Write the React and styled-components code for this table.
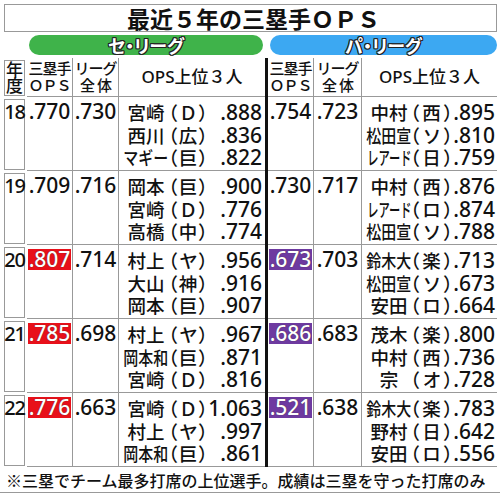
import React from 'react';
import styled, { createGlobalStyle } from 'styled-components';

const GlobalStyle = createGlobalStyle`
  body {
    margin: 0;
    background: #fff;
  }
`;

const COLS = '24px 45px 46px 147px 3px 45px 48px 1fr';
const LINE = '#999';

const Sheet = styled.div`
  width: 500px;
  height: 496px;
  padding-top: 4px;
  box-sizing: border-box;
  background: #fff;
  color: #111;
  font-family: "Noto Sans", "Noto Sans CJK JP", sans-serif;
`;

const Title = styled.h1`
  margin: 0 3px 0 4px;
  height: 28px;
  box-sizing: border-box;
  border: 1px solid ${LINE};
  display: flex;
  align-items: center;
  justify-content: center;
  padding-left: 6px;
  font-family: "Noto Sans CJK JP", sans-serif;
  font-size: 23px;
  font-weight: 700;
  line-height: 1;
`;

const PillRow = styled.div`
  display: flex;
  gap: 7px;
  height: 20px;
  margin: 3px 3px 0 29px;
`;

const LeaguePill = styled.div`
  flex: ${(p) => (p.$width ? `0 0 ${p.$width}px` : '1')};
  border-radius: 10px;
  background: ${(p) => p.$color};
  display: flex;
  align-items: center;
  justify-content: center;
  color: #fff;
  font-family: "Noto Sans CJK JP", sans-serif;
  font-size: 18px;
  font-weight: 700;
  line-height: 1;
  font-feature-settings: "palt";
  text-shadow: 1px 0 0 #222, -1px 0 0 #222, 0 1px 0 #222, 0 -1px 0 #222,
    1px 1px 0 #222, -1px -1px 0 #222, 1px -1px 0 #222, -1px 1px 0 #222;
`;

const GridRow = styled.div`
  display: grid;
  grid-template-columns: ${COLS};
  height: ${(p) => p.$height}px;
  margin: 0 3px 0 3px;
  margin-top: ${(p) => p.$top || 0}px;
`;

const YearBox = styled.div`
  margin: 2px 2px 1px 1px;
  border: 1px solid ${LINE};
  display: flex;
  flex-direction: column;
  align-items: center;
  justify-content: ${(p) => (p.$head ? 'center' : 'flex-start')};
  padding-top: ${(p) => (p.$head ? 0 : 1)}px;
  font-size: ${(p) => (p.$head ? 17 : 20)}px;
  line-height: ${(p) => (p.$head ? '16px' : '22.5px')};
  letter-spacing: ${(p) => (p.$head ? 0 : -1.2)}px;
  font-weight: 500;
  overflow: visible;
  white-space: nowrap;
`;

const HeadCell = styled.div`
  border-bottom: 1px solid ${LINE};
  border-left: ${(p) => (p.$left ? `1px solid ${LINE}` : 'none')};
  display: flex;
  flex-direction: column;
  align-items: center;
  justify-content: center;
  font-size: ${(p) => p.$size || 15}px;
  line-height: 17.5px;
  letter-spacing: ${(p) => (p.$size ? 0 : -1)}px;
  font-weight: 500;
  white-space: nowrap;
`;

const Cell = styled.div`
  border-bottom: 1px solid ${LINE};
  border-left: ${(p) => (p.$left ? `1px solid ${LINE}` : 'none')};
  display: flex;
  flex-direction: column;
  align-items: ${(p) => (p.$list ? 'stretch' : 'center')};
  padding-top: 4px;
  font-size: 21px;
  line-height: 22.5px;
  font-weight: 500;
`;

const Divider = styled.div`
  background: #111;
`;

const Value = styled.span`
  display: inline-block;
  padding: 0 1px;
  line-height: 21px;
  background: ${(p) => p.$hot || 'transparent'};
  color: ${(p) => (p.$hot ? '#fff' : 'inherit')};
  text-shadow: ${(p) => (p.$hot ? '0 0 1px #333' : 'none')};
`;

const TopLine = styled.div`
  display: flex;
  justify-content: flex-end;
  align-items: center;
  height: 22.5px;
  padding-right: ${(p) => p.$pad}px;
  white-space: nowrap;
`;

const NameBox = styled.div`
  width: 46px;
  display: flex;
  justify-content: center;
  padding-left: ${(p) => p.$shift || 0}px;
  box-sizing: border-box;
  font-family: "Noto Sans CJK JP", sans-serif;
  font-size: 18.5px;
`;

const NameText = styled.span`
  display: inline-block;
  transform: scaleX(${(p) => p.$scale});
  transform-origin: center;
`;

const TeamBox = styled.div`
  width: ${(p) => p.$w}px;
  display: flex;
  justify-content: space-between;
  font-family: "Noto Sans CJK JP", sans-serif;
  font-size: 18.5px;
  font-feature-settings: "palt";
`;

const Num = styled.div`
  width: ${(p) => p.$w}px;
  text-align: right;
`;

const Note = styled.div`
  height: 26px;
  box-sizing: border-box;
  border-bottom: 1px solid ${LINE};
  padding-left: 6px;
  display: flex;
  align-items: center;
  font-family: "Noto Sans CJK JP", sans-serif;
  font-size: 16px;
  font-weight: 500;
  white-space: nowrap;
`;

const RED = '#e8101a';
const PURPLE = '#6e3aa0';

const rows = [
  {
    year: '18',
    ce: { ops: '.770', lg: '.730', top: [['宮崎', 'Ｄ', '.888'], ['西川', '広', '.836'], ['マギー', '巨', '.822']] },
    pa: { ops: '.754', lg: '.723', top: [['中村', '西', '.895'], ['松田宣', 'ソ', '.810'], ['レアード', '日', '.759']] },
  },
  {
    year: '19',
    ce: { ops: '.709', lg: '.716', top: [['岡本', '巨', '.900'], ['宮崎', 'Ｄ', '.776'], ['高橋', '中', '.774']] },
    pa: { ops: '.730', lg: '.717', top: [['中村', '西', '.876'], ['レアード', 'ロ', '.874'], ['松田宣', 'ソ', '.788']] },
  },
  {
    year: '20',
    ce: { ops: '.807', hot: true, lg: '.714', top: [['村上', 'ヤ', '.956'], ['大山', '神', '.916'], ['岡本', '巨', '.907']] },
    pa: { ops: '.673', hot: true, lg: '.703', top: [['鈴木大', '楽', '.713'], ['松田宣', 'ソ', '.673'], ['安田', 'ロ', '.664']] },
  },
  {
    year: '21',
    ce: { ops: '.785', hot: true, lg: '.698', top: [['村上', 'ヤ', '.967'], ['岡本和', '巨', '.871'], ['宮崎', 'Ｄ', '.816']] },
    pa: { ops: '.686', hot: true, lg: '.683', top: [['茂木', '楽', '.800'], ['中村', '西', '.736'], ['宗', 'オ', '.728']] },
  },
  {
    year: '22',
    ce: { ops: '.776', hot: true, lg: '.663', top: [['宮崎', 'Ｄ', '1.063'], ['村上', 'ヤ', '.997'], ['岡本和', '巨', '.861']] },
    pa: { ops: '.521', hot: true, lg: '.638', top: [['鈴木大', '楽', '.783'], ['野村', '日', '.642'], ['安田', 'ロ', '.556']] },
  },
];

const TopList = ({ items, numW, teamW, pad, shift }) =>
  items.map(([name, team, val]) => (
    <TopLine key={name + val} $pad={pad}>
      <NameBox $shift={shift}>
        <NameText $scale={Math.min(1, 45 / (name.length * 18.5))}>{name}</NameText>
      </NameBox>
      <TeamBox $w={teamW}>
        <span>（</span>
        <span>{team}</span>
        <span>）</span>
      </TeamBox>
      <Num $w={numW}>{val}</Num>
    </TopLine>
  ));

const LeagueCells = ({ data, hot, side }) => {
  const left = side === 'ce';
  return (
    <>
      <Cell>
        <Value $hot={data.hot ? hot : null}>{data.ops}</Value>
      </Cell>
      <Cell $left>
        <Value>{data.lg}</Value>
      </Cell>
      <Cell $left $list>
        <TopList
          items={data.top}
          numW={left ? 54 : 42}
          teamW={left ? 40 : 43}
          pad={left ? 3 : 2}
          shift={left ? 2 : 4}
        />
      </Cell>
    </>
  );
};

const HeadCells = () => (
  <>
    <HeadCell>
      <span>三塁手</span>
      <span>ＯＰＳ</span>
    </HeadCell>
    <HeadCell $left>
      <span>リーグ</span>
      <span>全 体</span>
    </HeadCell>
    <HeadCell $left $size={17}>
      <span>OPS上位３人</span>
    </HeadCell>
  </>
);

export default function App() {
  return (
    <Sheet>
      <GlobalStyle />
      <Title>最近５年の三塁手ＯＰＳ</Title>
      <PillRow>
        <LeaguePill $color="#3fb34a" $width={234}>セ・リーグ</LeaguePill>
        <LeaguePill $color="#3ca8f2">パ・リーグ</LeaguePill>
      </PillRow>
      <GridRow $height={39} $top={3}>
        <YearBox $head>
          <span>年</span>
          <span>度</span>
        </YearBox>
        <HeadCells />
        <Divider />
        <HeadCells />
      </GridRow>
      {rows.map((r) => (
        <GridRow key={r.year} $height={74}>
          <YearBox>{r.year}</YearBox>
          <LeagueCells data={r.ce} hot={RED} side="ce" />
          <Divider />
          <LeagueCells data={r.pa} hot={PURPLE} side="pa" />
        </GridRow>
      ))}
      <Note>※三塁でチーム最多打席の上位選手。成績は三塁を守った打席のみ</Note>
    </Sheet>
  );
}
